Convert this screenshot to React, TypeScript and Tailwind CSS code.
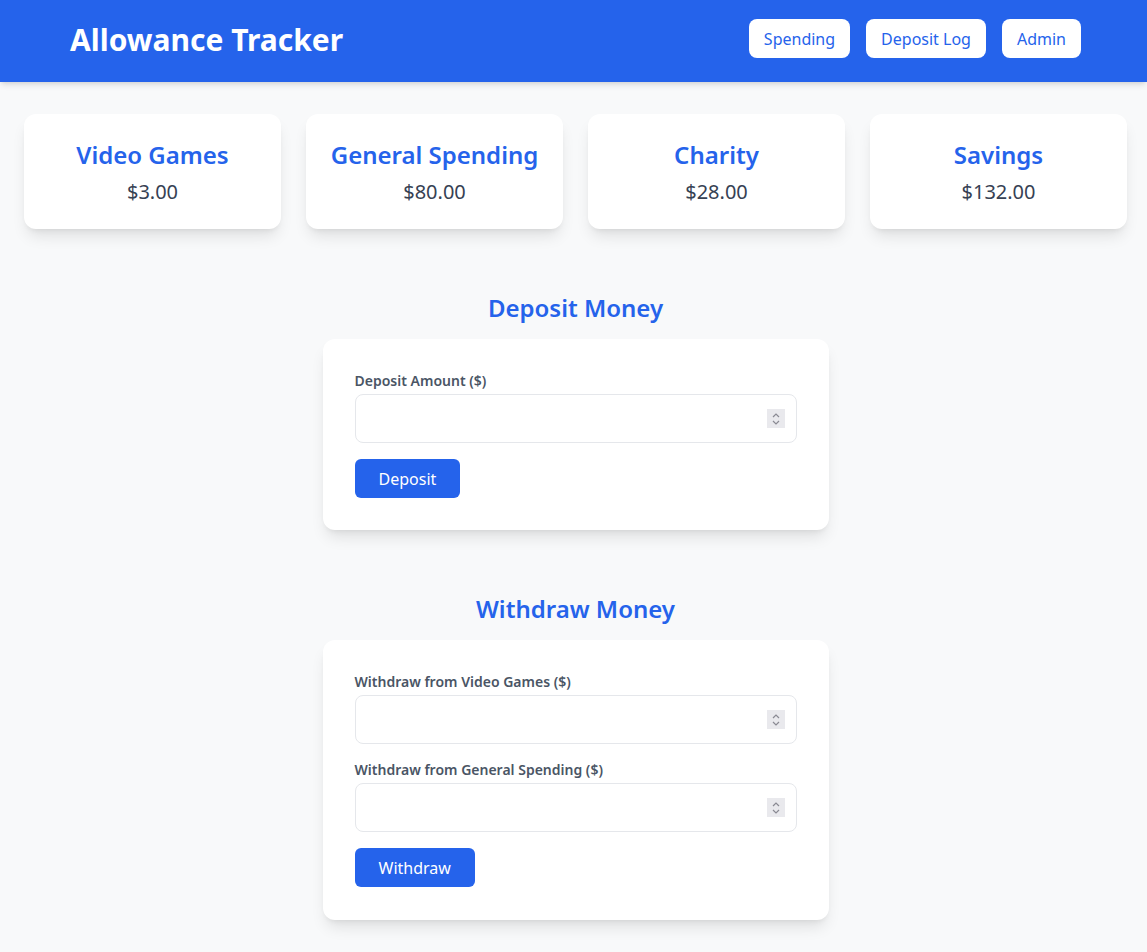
import React, { useState } from "react";

const Balances = [
  { name: "Video Games", amount: 3 },
  { name: "General Spending", amount: 80 },
  { name: "Charity", amount: 28 },
  { name: "Savings", amount: 132 },
];

const navLinks = ["Spending", "Deposit Log", "Admin"];

function Field({ label, value, onChange }: { label: string; value: string; onChange: (v: string) => void }) {
  return (
    <div className="mb-4">
      <label className="block text-sm font-semibold text-gray-600 mb-[3px]">{label}</label>
      <div className="relative">
        <input
          type="number"
          value={value}
          onChange={(e) => onChange(e.target.value)}
          className="w-full h-[49px] px-4 border border-[#e5e7eb] rounded-lg bg-white text-base text-gray-700 focus:outline-none [appearance:textfield] [&::-webkit-inner-spin-button]:appearance-none"
        />
        {/* spinner drawn by hand so it always shows */}
        <div className="pointer-events-none absolute right-3 top-[15px] w-[18px] h-[19px] bg-[#e9e9ed] flex flex-col items-center justify-center gap-[2px]">
          <svg width="8" height="5" viewBox="0 0 8 5" fill="none">
            <path d="M1 4L4 1L7 4" stroke="#8a8a93" strokeWidth="1.2" />
          </svg>
          <svg width="8" height="5" viewBox="0 0 8 5" fill="none">
            <path d="M1 1L4 4L7 1" stroke="#8a8a93" strokeWidth="1.2" />
          </svg>
        </div>
      </div>
    </div>
  );
}

export default function App() {
  const [deposit, setDeposit] = useState("");
  const [videoGames, setVideoGames] = useState("");
  const [general, setGeneral] = useState("");

  return (
    <div className="min-h-screen bg-[#f8f9fa] font-['Noto_Sans',sans-serif]">
      <header className="bg-[#2563eb] shadow-md h-[82px] pl-[70px] pr-[66px] flex items-start justify-between">
        <h1 className="text-3xl font-bold text-white mt-[22px]">Allowance Tracker</h1>
        <nav className="flex gap-4 mt-[19px]">
          {navLinks.map((link) => (
            <button key={link} className="bg-white text-[#2563eb] rounded-lg px-[15px] h-[39px] text-base">
              {link}
            </button>
          ))}
        </nav>
      </header>

      <main className="pl-6 pr-5 pt-8 pb-8">
        <div className="grid grid-cols-4 gap-[25px]">
          {Balances.map((item) => (
            <div key={item.name} className="bg-white rounded-xl shadow-lg pt-[25px] pb-[23px] px-6 text-center">
              <h2 className="text-2xl font-semibold text-[#2563eb]">{item.name}</h2>
              <p className="text-xl text-gray-700 mt-[7px]">${item.amount.toFixed(2)}</p>
            </div>
          ))}
        </div>

        <section className="mt-[63px]">
          <h2 className="text-2xl font-semibold text-[#2563eb] text-center mb-[15px]">Deposit Money</h2>
          <div className="bg-white rounded-xl shadow-lg p-8 max-w-[506px] mx-auto">
            <Field label="Deposit Amount ($)" value={deposit} onChange={setDeposit} />
            <button className="bg-[#2563eb] text-white rounded-md px-6 h-[39px] text-base">Deposit</button>
          </div>
        </section>

        <section className="mt-[63px]">
          <h2 className="text-2xl font-semibold text-[#2563eb] text-center mb-[15px]">Withdraw Money</h2>
          <div className="bg-white rounded-xl shadow-lg pt-8 px-8 pb-[33px] max-w-[506px] mx-auto">
            <Field label="Withdraw from Video Games ($)" value={videoGames} onChange={setVideoGames} />
            <Field label="Withdraw from General Spending ($)" value={general} onChange={setGeneral} />
            <button className="bg-[#2563eb] text-white rounded-md px-6 h-[39px] text-base">Withdraw</button>
          </div>
        </section>
      </main>
    </div>
  );
}
